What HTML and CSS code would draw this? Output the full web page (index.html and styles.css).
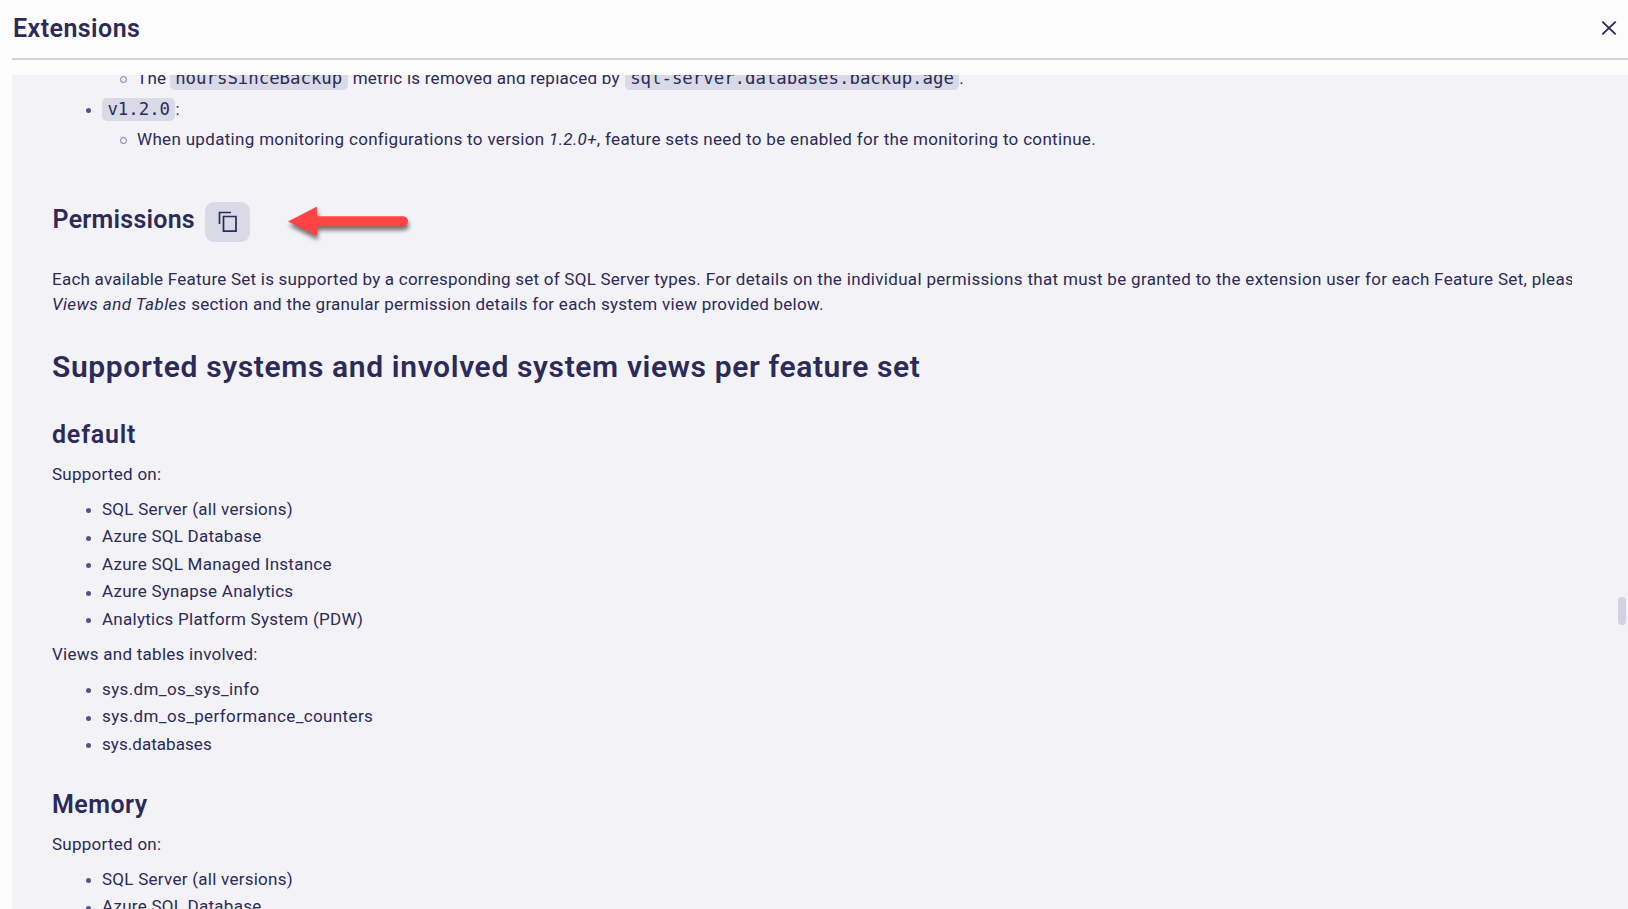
FILE: index.html
```
<!DOCTYPE html>
<html lang="en">
<head>
<meta charset="utf-8">
<title>Extensions</title>
<link rel="stylesheet" href="styles.css">
</head>
<body>
<header class="header">
  <h2 class="title">Extensions</h2>
  <button class="close" aria-label="Close"><svg width="16" height="16" viewBox="0 0 16 16"><path d="M1.3 1.6 14.7 14.4M14.7 1.6 1.3 14.4" fill="none" stroke="#2b2a58" stroke-width="1.9"/></svg></button>
</header>
<main class="panel">
  <div class="content">
    <ul class="notes">
      <li class="sub metric">The <code>hoursSinceBackup</code><span class="mid">metric is removed and replaced by</span><code>sql-server.databases.backup.age</code>.</li>
      <li class="release"><code>v1.2.0</code>:</li>
      <li class="sub update">When updating monitoring configurations to version <em>1.2.0+</em>, feature sets need to be enabled for the monitoring to continue.</li>
    </ul>
    <div class="section">
      <h3 class="perm">Permissions</h3>
      <button class="copy" aria-label="Copy"><svg width="20" height="22" viewBox="0 0 20 22"><path d="M1.5 13V1.5H13M5.5 5.5H18V20.2H5.5Z" fill="none" stroke="#2b2a58" stroke-width="1.7"/></svg></button>
      <svg class="arrow" width="130" height="42" viewBox="0 0 130 42"><path d="M4 17.5 33 2.5V12.2H119a5 5 0 0 1 0 10H33V32Z" fill="#ff4444"/></svg>
    </div>
    <p class="intro"><span class="first">Each available Feature Set is supported by a corresponding set of SQL Server types.</span><span class="rest"> For details on the individual permissions that must be granted to the extension user for each Feature Set, please</span><br><em>Views and Tables</em> <span class="second">section and the granular permission details for each system view provided below.</span></p>
    <h1>Supported systems and involved system views per feature set</h1>
    <h3 class="default">default</h3>
    <p>Supported on:</p>
    <ul class="list">
      <li>SQL Server (all versions)</li>
      <li>Azure SQL Database</li>
      <li>Azure SQL Managed Instance</li>
      <li>Azure Synapse Analytics</li>
      <li>Analytics Platform System (PDW)</li>
    </ul>
    <p>Views and tables involved:</p>
    <ul class="list">
      <li class="wide">sys.dm_os_sys_info</li>
      <li class="wide">sys.dm_os_performance_counters</li>
      <li class="narrow">sys.databases</li>
    </ul>
    <h3 class="memory">Memory</h3>
    <p>Supported on:</p>
    <ul class="list">
      <li>SQL Server (all versions)</li>
      <li>Azure SQL Database</li>
    </ul>
  </div>
  <div class="thumb"></div>
</main>
</body>
</html>
```
FILE: styles.css
```
*, *::before { box-sizing: border-box; }
body {
  margin: 0;
  height: 909px;
  overflow: hidden;
  display: flex;
  flex-direction: column;
  background: #fcfcfd;
  color: #2b2a58;
  font: 17px/25px Roboto, "Noto Sans", sans-serif;
  letter-spacing: 0.26px;
}
h1, h2, h3, p, ul { margin: 0; padding: 0; }
button { border: 0; padding: 0; background: none; }
.header {
  flex: none;
  display: flex;
  align-items: center;
  justify-content: space-between;
  height: 60px;
  margin-left: 12px;
  padding: 0 11px 2px 0;
  border-bottom: 2px solid #d1d0e2;
}
h2, h3 { font-size: 25px; line-height: 32px; font-weight: 600; letter-spacing: 0.45px; }
.title { padding: 2px 0 0 1px; }
.close { display: flex; }
.panel {
  flex: 1;
  min-height: 0;
  display: flex;
  justify-content: space-between;
  margin: 15px 0 0 12px;
  background: #f3f2f7;
  overflow: hidden;
}
.content { width: 1520px; margin-left: 40px; overflow: hidden; }
.thumb { width: 8px; height: 28px; margin: 522px 2px 0 0; border-radius: 4px; background: #d1d1e0; }
ul { list-style: none; }
li { display: flex; align-items: center; height: 25px; margin-bottom: 2.5px; white-space: pre; }
li::before { content: ""; flex: none; width: 5px; height: 5px; margin: 3px 11.5px 0 33.5px; border-radius: 50%; background: #555486; }
.wide { letter-spacing: 0.38px; }
.narrow { letter-spacing: 0.05px; }
.notes { margin-top: -9px; }
.notes li { margin-bottom: 5.5px; }
.notes .sub::before { width: 7px; height: 7px; margin: 2px 10px 0 68px; border: 1.5px solid #77769e; background: none; }
.update { letter-spacing: 0.32px; }
.mid { padding: 0 5px; letter-spacing: 0.25px; }
.metric code:first-of-type { margin-left: -1px; }
code {
  height: 23px;
  padding: 0 5.4px;
  border-radius: 5px;
  background: #dadae6;
  font: 17.35px/23px "DejaVu Sans Mono", monospace;
  letter-spacing: 0;
}
.section { display: flex; height: 40px; margin-top: 50px; }
.perm { width: 153px; margin-top: 2px; padding-left: 0.5px; letter-spacing: 0.25px; }
.copy { display: flex; align-items: center; justify-content: center; width: 45px; height: 40px; border-radius: 9px; background: #dadae6; }
.arrow { margin: 2px 0 0 34px; overflow: visible; filter: drop-shadow(1px 4px 2px #0008); }
.intro { margin-top: 25px; white-space: nowrap; }
.intro em { letter-spacing: 0.42px; }
.first { letter-spacing: 0.235px; }
.rest { letter-spacing: 0.32px; }
h1 { margin-top: 30px; font-size: 30px; line-height: 40px; font-weight: 600; letter-spacing: 0.63px; white-space: nowrap; }
.default { margin: 32px 0 10.5px; letter-spacing: 0.8px; }
.list { margin: 10px 0; }
.memory { margin: 32.5px 0 10.5px; }
```
